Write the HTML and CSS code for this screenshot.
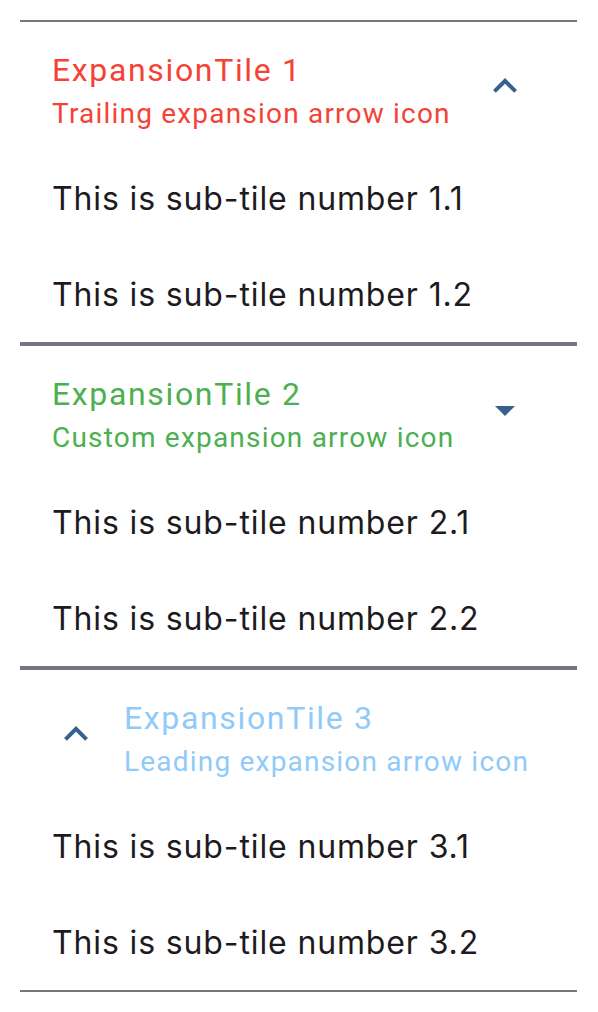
FILE: index.html
```html
<!DOCTYPE html>
<html>
<head>
<meta charset="utf-8">
<link rel="stylesheet" href="styles.css">
</head>
<body>
<div class="list">
  <section class="tile">
    <div class="header">
      <div class="texts">
        <div class="title red">ExpansionTile 1</div>
        <div class="subtitle red">Trailing expansion arrow icon</div>
      </div>
      <svg class="icon" viewBox="0 0 24 24"><path d="M12 8l-6 6 1.41 1.41L12 10.83l4.59 4.58L18 14z"/></svg>
    </div>
    <div class="sub">This is sub-tile number 1.1</div>
    <div class="sub">This is sub-tile number 1.2</div>
  </section>
  <section class="tile">
    <div class="header">
      <div class="texts">
        <div class="title green">ExpansionTile 2</div>
        <div class="subtitle green">Custom expansion arrow icon</div>
      </div>
      <svg class="icon" viewBox="0 0 24 24"><path d="M7 10l5 5 5-5z"/></svg>
    </div>
    <div class="sub">This is sub-tile number 2.1</div>
    <div class="sub">This is sub-tile number 2.2</div>
  </section>
  <section class="tile">
    <div class="header leading">
      <svg class="icon" viewBox="0 0 24 24"><path d="M12 8l-6 6 1.41 1.41L12 10.83l4.59 4.58L18 14z"/></svg>
      <div class="texts">
        <div class="title blue">ExpansionTile 3</div>
        <div class="subtitle blue">Leading expansion arrow icon</div>
      </div>
    </div>
    <div class="sub">This is sub-tile number 3.1</div>
    <div class="sub">This is sub-tile number 3.2</div>
  </section>
</div>
</body>
</html>
```
FILE: styles.css
```css
html, body {
  margin: 0;
  padding: 0;
  background: #ffffff;
}
.list {
  margin: 20px 21px 0 20px;
}
.tile {
  border-top: 2px solid #74777f;
  border-bottom: 2px solid #74777f;
}
.header {
  height: 128px;
  box-sizing: border-box;
  display: flex;
  align-items: center;
  padding: 0 48px 0 32px;
}
.header.leading {
  gap: 24px;
  padding-right: 24px;
}
.texts {
  flex: 1;
  min-width: 0;
  display: flex;
  flex-direction: column;
  padding-top: 8px;
  white-space: nowrap;
  font-family: Roboto, "Liberation Sans", sans-serif;
}
.title {
  font-size: 32px;
  line-height: 48px;
  letter-spacing: 1.65px;
}
.subtitle {
  font-size: 28px;
  line-height: 40px;
  letter-spacing: 1.2px;
}
.red { color: #f44336; }
.green { color: #4caf50; }
.blue { color: #90caf9; }
.icon {
  width: 48px;
  height: 48px;
  fill: #36618e;
  flex: none;
}
.sub {
  height: 96px;
  display: flex;
  align-items: center;
  padding-left: 32px;
  font-family: Inter, "Noto Sans", sans-serif;
  font-size: 32px;
  letter-spacing: 0.87px;
  color: #1d1b20;
}
```
